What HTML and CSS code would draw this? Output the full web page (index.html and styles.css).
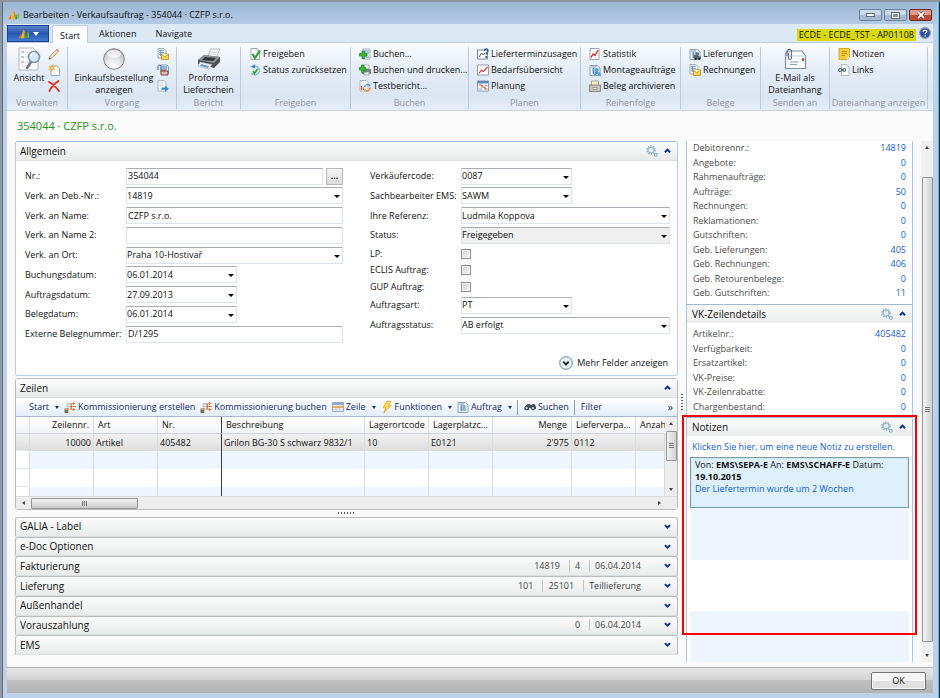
FILE: index.html
```html
<!DOCTYPE html>
<html lang="de">
<head>
    <meta charset="UTF-8">
    <meta name="viewport" content="width=device-width, initial-scale=1.0">
    <title>Bearbeiten - Verkaufsauftrag - 354044 · CZFP s.r.o.</title>
    <link rel="stylesheet" href="styles.css">
</head>
<body>
    <!-- Icons -->
    <svg class="sprite" aria-hidden="true">
        <radialGradient id="ballFill" cx=".45" cy=".85" r=".9">
            <stop offset="0" stop-color="#fff"/>
            <stop offset=".6" stop-color="#d8d8d8"/>
            <stop offset="1" stop-color="#a5a5a5"/>
        </radialGradient>
        <symbol id="logo" viewBox="0 0 14 12">
            <path d="M.5 11 3.500 6l.5 5z" fill="#e8642c"/>
            <path d="M3 11 6.500.5 7.500 11z" fill="#f9b41e"/>
            <path d="M6.500.5 8.500 4l-1 7z" fill="#e4881b"/>
            <path d="M8.500 11V6l2 .5V11z" fill="#3e9b3f"/>
            <path d="m11 11V3.500l2 1.500v5z" fill="#7ab84a"/>
        </symbol>
        <symbol id="page" viewBox="0 0 12 12">
            <path d="M2 .5h6l2.500 2.500v8.500H2z" fill="#fdfdfe" stroke="#9aa7b5"/>
            <path d="M8 .5V3h2.500" fill="#dfe8f2" stroke="#9aa7b5" stroke-width=".7"/>
        </symbol>
        <symbol id="doc" viewBox="0 0 12 12">
            <path d="M1 1.500h7.500L11 4v7.500H1z" fill="#f4f8fc" stroke="#8d9fb4"/>
            <path d="M2 3h5M3 5h6.500M3 7h6.500M3 9h6.500M4.500 4v6M7 4v6" stroke="#4d83bd" stroke-width=".8"/>
        </symbol>
        <symbol id="view" viewBox="0 0 24 24">
            <path d="M2 1h14l5 5v17H2z" fill="#fbfbfb" stroke="#b5babf"/>
            <path d="M4 4h3v2H4zM4 9h3v2H4zM4 14h3v2H4z" fill="#c3c8ce"/>
            <path d="M8 5h5M8 10h3M8 15h5M5 19h9" stroke="#ccd1d6"/>
            <path d="m14 15-4 6" stroke="#70777f" stroke-width="2.500" stroke-linecap="round"/>
            <circle cx="17" cy="10" r="5.500" fill="#cfe6f8" fill-opacity=".9" stroke="#7b92a8" stroke-width="1.500"/>
            <path d="M13.500 9a4 4 0 0 1 4-3" stroke="#fff" stroke-width="1.500" fill="none"/>
        </symbol>
        <symbol id="pencil" viewBox="0 0 12 12">
            <path d="m1 11 1-3 7-7 2 2-7 7z" fill="#f6dcb3" stroke="#b79c78" stroke-width=".8"/>
            <path d="m8 2 2 2 1.300-1.200L9.300.8z" fill="#d6a19a"/>
            <path d="m.5 11.500.7-2 1.300 1.200z" fill="#444"/>
        </symbol>
        <symbol id="new" viewBox="0 0 12 12">
            <path d="M3 2h6l2.500 2.500v7H3z" fill="#fff" stroke="#8d9fb4" stroke-width=".9"/>
            <path d="m4 0 1 2.500L7.500 2 6 4l1.500 2L5 5.500 4 8 3 5.500.5 6 2 4 .5 2 3 2.500z" fill="#f6a01e"/>
            <circle cx="4" cy="4" r="1.300" fill="#ffe28a"/>
        </symbol>
        <symbol id="delete" viewBox="0 0 12 12">
            <path d="M1 2c4 2 7 5 10 9M10.500 1C6 4 3 7 1.500 11" fill="none" stroke="#e02f1c" stroke-width="1.900" stroke-linecap="round"/>
        </symbol>
        <symbol id="ball" viewBox="0 0 24 24">
            <circle cx="12" cy="12" r="10.300" fill="url(#ballFill)" stroke="#858585"/>
            <ellipse cx="12" cy="7" rx="7" ry="4" fill="#fff" opacity=".65"/>
        </symbol>
        <symbol id="docmail" viewBox="0 0 12 12">
            <path d="M1 .5h6L9 2.500V10H1z" fill="#e9f1fa" stroke="#8d9fb4" stroke-width=".8"/>
            <path d="M2 2.500h5M2 4.500h5M2 6.500h3M3.500 2v6" stroke="#5f92c6" stroke-width=".8"/>
            <path d="M4.500 6h7v5.500h-7z" fill="#ffd65a" stroke="#b98c22" stroke-width=".8"/>
            <path d="m4.500 6 3.500 3 3.500-3" fill="#fff0ae" stroke="#b98c22" stroke-width=".7"/>
        </symbol>
        <symbol id="docattach" viewBox="0 0 12 12">
            <path d="M4 1h6l1.500 1.500V9H4z" fill="#d9e8f7" stroke="#6f8dac" stroke-width=".8"/>
            <path d="M1 6V2.500a1.500 1.500 0 0 1 3 0V7" fill="none" stroke="#38638f"/>
            <path d="M5 3h5M5 5h5" stroke="#4d83bd"/>
            <path d="M4 7h7v4H4z" fill="#d9bfae" stroke="#6d2f25" stroke-width=".8"/>
            <path d="M5 6.500h4" stroke="#d9502e" stroke-width="1.500"/>
        </symbol>
        <symbol id="docnext" viewBox="0 0 12 12">
            <path d="M1 .5h6l2 2V11H1z" fill="#f7fafd" stroke="#9aa7b5" stroke-width=".8"/>
            <path d="M2.500 3H6M2.500 5h4" stroke="#c4d0dd"/>
            <path d="M4.500 7.500H8V5.500L11.800 8.700 8 12v-2.200H4.500z" fill="#2b8fd6"/>
        </symbol>
        <symbol id="printer" viewBox="0 0 24 22">
            <path d="m11 8 3-7h9l-4 9z" fill="#fdfdfd" stroke="#9fa3a8" stroke-width=".8"/>
            <path d="m14 4 6 .5M13 6l6 .5" stroke="#c6ccd4"/>
            <path d="M1 12 7 7l16 2v5l-6 6-16-4z" fill="#4b4e54"/>
            <path d="m1 12 6-5 16 2-6 6z" fill="#8e9299"/>
            <path d="m5 12 3-3 11 1-3 3z" fill="#30333a"/>
            <path d="m3 14 12 2.500-3 4.500-11-3z" fill="#f3f6fa" stroke="#9fa3a8" stroke-width=".6"/>
            <path d="m4 16 8 2-1 2-8-2z" fill="#6d9fd4"/>
        </symbol>
        <symbol id="release" viewBox="0 0 12 12">
            <use href="#page"/>
            <path d="m3.500 6 2.500 4L11 2.500" fill="none" stroke="#27a327" stroke-width="2.200"/>
        </symbol>
        <symbol id="reset" viewBox="0 0 12 12">
            <path d="M3.500 3A4.300 4.300 0 1 1 2.500 9" fill="#e6f3fb" stroke="#7fb2d3" stroke-width="1.300"/>
            <path d="M1.500 2.500 6 .5v4z" fill="#2f86c1"/>
            <path d="m4 7 1.500 2.500L8.500 5" fill="none" stroke="#2ba12b" stroke-width="1.600"/>
        </symbol>
        <symbol id="post" viewBox="0 0 12 12">
            <path d="M4 1h7v10H4z" fill="#eef4fb" stroke="#8d9fb4" stroke-width=".8"/>
            <path d="M5 3h5M5 5h5M6 9h4" stroke="#4d83bd" stroke-width=".9"/>
            <path d="M3 3h2.500v2.500H8V8H5.500v2.500H3V8H.5V5.500H3z" fill="#3dbb3a" stroke="#1b7f1b" stroke-width=".7"/>
        </symbol>
        <symbol id="postprint" viewBox="0 0 12 12">
            <path d="M5 1h5v4H5z" fill="#fff" stroke="#8d9399" stroke-width=".7"/>
            <path d="M3 5h9v5H3z" fill="#7b8087"/>
            <path d="M5 8h5v3H5z" fill="#e8eef5" stroke="#8d9399" stroke-width=".6"/>
            <path d="M2.500 1H5v2.500h2V6H5v2.500H2.500V6H.5V3.500h2z" fill="#3dbb3a" stroke="#1b7f1b" stroke-width=".7"/>
        </symbol>
        <symbol id="testreport" viewBox="0 0 12 12">
            <path d="M1 .5h6l2 2V11H1z" fill="#f7fafd" stroke="#9aa7b5" stroke-width=".8"/>
            <path d="M2.500 10V6M4.500 10V7.500" stroke="#e0442b" stroke-width="1.200"/>
            <path d="M5.500 7a3 3 0 0 1 5.500-1" fill="none" stroke="#4b93d1" stroke-width="1.500"/>
            <path d="M11 7.500a3 3 0 0 1-5.500 2" fill="none" stroke="#f39323" stroke-width="1.500"/>
        </symbol>
        <symbol id="chart" viewBox="0 0 12 12">
            <path d="M.5 1h11v10H.5z" fill="#fff" stroke="#8a8f9b" stroke-width=".9"/>
            <path d="M2 9.500 4.500 6l2 1.500L10.500 3" fill="none" stroke="#e23b2c" stroke-width="1.200"/>
        </symbol>
        <symbol id="promise" viewBox="0 0 12 12">
            <path d="M.5 2h10v9H.5z" fill="#fff" stroke="#6f7786" stroke-width=".9"/>
            <path d="m2 9 2.500-4 2 2L8 5" fill="none" stroke="#444d5c"/>
            <path d="M7.500 3c0-3 4-2.500 3.500 0 0 1.500-1.800 1.500-1.800 3.500" fill="none" stroke="#2558b8" stroke-width="1.500"/>
            <circle cx="9.200" cy="9" r="1.100" fill="#2558b8"/>
        </symbol>
        <symbol id="plan" viewBox="0 0 12 12">
            <path d="M.5 1h11v10H.5z" fill="#fff" stroke="#8494aa" stroke-width=".9"/>
            <path d="M.5 1h11v2.500H.5z" fill="#5c86bd"/>
            <path d="M2 5h3v2h3v2h2.500" fill="none" stroke="#d3573c" stroke-width="1.200"/>
            <path d="M2 9h3M8 5.500h2.500" stroke="#7b97bf"/>
        </symbol>
        <symbol id="stats" viewBox="0 0 12 12">
            <path d="M1 .5h9v11H1z" fill="#fff" stroke="#8a9bb0" stroke-width=".9"/>
            <path d="m2 9.500 2-3.500 2 1.500L9 2" fill="none" stroke="#e02f2f" stroke-width="1.400"/>
        </symbol>
        <symbol id="assembly" viewBox="0 0 12 12">
            <use href="#doc"/>
            <path d="M8 6v3M8 9H6v2M8 9h2.500v2" fill="none" stroke="#277fc2"/>
            <path d="M6.500 4.500h3V7h-3zM5 9.500h2.300V12H5zM9.300 9.500h2.500V12H9.300z" fill="#43a8e0"/>
        </symbol>
        <symbol id="archive" viewBox="0 0 12 12">
            <path d="M2.500 1h7v5h-7z" fill="#f7eec7" stroke="#9c957c" stroke-width=".8"/>
            <path d="M.5 5h11v6.500H.5z" fill="#c7c3b6" stroke="#7a776c" stroke-width=".8"/>
            <path d="M4 7.500h4v2H4z" fill="#fff" stroke="#77746a" stroke-width=".6"/>
        </symbol>
        <symbol id="shipment" viewBox="0 0 12 12">
            <use href="#doc"/>
            <path d="M5 7h4l1.500 1.500H12V11H5z" fill="#5a6470"/>
            <path d="M7 4.500h3V7H7z" fill="#6b7785"/>
            <circle cx="6.700" cy="11" r="1" fill="#222"/>
            <circle cx="10.200" cy="11" r="1" fill="#222"/>
        </symbol>
        <symbol id="mail" viewBox="0 0 24 22">
            <path d="M2.500 5.500 5 3h14l3.500 5v12.500h-20z" fill="#fbfcfe" stroke="#7b8fae" stroke-width="1.200"/>
            <path d="M2.500 8h20" stroke="#c3cede"/>
            <path d="M19 10h2v3h-2z" fill="#e0462d"/>
            <path d="M7 14h9M7 16.500h7" stroke="#8aa0bf" stroke-width="1.200"/>
            <path d="M4 8V3.500a2.200 2.200 0 0 1 4.500 0V10a1.500 1.500 0 0 1-3 0V5" fill="none" stroke="#66748a" stroke-width="1.100"/>
        </symbol>
        <symbol id="note" viewBox="0 0 12 12">
            <path d="M1 .5h10.500V9l-2.500 2.500H1z" fill="#f7cf3d" stroke="#c99b16" stroke-width=".8"/>
            <path d="M3.500 3.500H9M3.500 5.500H9M3.500 7.500H7" stroke="#a37b10" stroke-width=".8"/>
            <path d="M9 11.500V9h2.500z" fill="#fff1ae"/>
        </symbol>
        <symbol id="link" viewBox="0 0 12 12">
            <path d="M3.500.5h5L11 3v8.500H3.500z" fill="#fdfdfe" stroke="#9aa7b5" stroke-width=".8"/>
            <circle cx="2.200" cy="6" r="1.500" fill="none" stroke="#33506f"/>
            <circle cx="6.300" cy="6" r="1.500" fill="none" stroke="#33506f"/>
            <path d="M3 6h3" stroke="#33506f"/>
        </symbol>
        <symbol id="help" viewBox="0 0 12 12">
            <circle cx="6" cy="6" r="5.400" fill="#2c50ae" stroke="#9c9fa8" stroke-width="1.100"/>
            <path d="M4.200 4.800C4.200 2.500 8 2.600 7.800 4.600c0 1.300-1.700 1.200-1.700 2.600" fill="none" stroke="#fff" stroke-width="1.300"/>
            <circle cx="6.100" cy="9" r=".8" fill="#fff"/>
        </symbol>
        <symbol id="gear" viewBox="0 0 12 12">
            <circle cx="5" cy="5" r="3.900" fill="none" stroke="#8fb3cf" stroke-width="1.600" stroke-dasharray="1.500 .95"/>
            <circle cx="5" cy="5" r="2.900" fill="#e4f0f8" stroke="#8fb3cf"/>
            <circle cx="9.800" cy="9.800" r="1.500" fill="#e4f0f8" stroke="#86abc9" stroke-width="1.100"/>
        </symbol>
        <symbol id="up" viewBox="0 0 6 6">
            <path d="M.8 4.500 3 2.200l2.200 2.300" fill="none" stroke="#10309a" stroke-width="1.700"/>
        </symbol>
        <symbol id="down" viewBox="0 0 6 6">
            <path d="M.8 1.800 3 4l2.200-2.200" fill="none" stroke="#10309a" stroke-width="1.700"/>
        </symbol>
        <symbol id="more" viewBox="0 0 14 14">
            <circle cx="7" cy="7" r="6.300" fill="#eef1f4" stroke="#4f88b5"/>
            <path d="M4.300 5.700 7 8.700l2.700-3" fill="none" stroke="#222" stroke-width="1.900"/>
        </symbol>
        <symbol id="pick" viewBox="0 0 12 12">
            <path d="M2 3h6M2 5.500h6M2 8h6M4 2v7M6.500 2v7" stroke="#a3b8cd" stroke-width=".8"/>
            <path d="M11.500 2.500h-4v6h4M12 5.500H6" fill="none" stroke="#f07a35"/>
            <path d="M9.500 1v3M9.500 7v3" stroke="#f07a35" stroke-width=".9"/>
            <path d="M.5 7.500h3.800V12H.5z" fill="#7a6d56"/>
            <path d="M.5 7.500h3.800V9H.5z" fill="#c9a35a"/>
        </symbol>
        <symbol id="lines" viewBox="0 0 12 12">
            <path d="M.5 1.500h11v9H.5z" fill="#fff" stroke="#8aa2bf" stroke-width=".9"/>
            <path d="M.5 2h11v2H.5z" fill="#8aabd2"/>
            <path d="M.5 5h11v2.300H.5z" fill="#f4a64a"/>
            <path d="M4.200 4v6.500M7.800 4v6.500M1 8.800h10" stroke="#a8bbd2" stroke-width=".7"/>
        </symbol>
        <symbol id="bolt" viewBox="0 0 12 12">
            <path d="M5.500.5H10L7.500 4.300h2.700L3 11.700l1.800-5H2.200z" fill="#ffdb55" stroke="#e0a322" stroke-width=".8"/>
        </symbol>
        <symbol id="find" viewBox="0 0 12 12">
            <path d="M1 5.500 3.500 3h2L7 4l1.500-1h2L12 5.500V8H8V7H5v2H.5z" fill="#4a5664"/>
            <circle cx="2.700" cy="7" r="1.800" fill="#9fc3df" stroke="#333d49"/>
            <circle cx="9" cy="7" r="1.800" fill="#9fc3df" stroke="#333d49"/>
        </symbol>
    </svg>

    <div class="window">
        <header class="titlebar">
            <svg class="icon"><use href="#logo"/></svg>
            <h1>Bearbeiten - Verkaufsauftrag - 354044 · CZFP s.r.o.</h1>
            <div class="window-buttons">
                <button type="button" aria-label="Minimieren"><span class="minimize"></span></button>
                <button type="button" aria-label="Maximieren"><span class="maximize"></span></button>
                <button type="button" class="close" aria-label="Schließen"><svg viewBox="0 0 10 8"><path d="m2 1 6 6M8 1 2 7" stroke="#5b3030" stroke-width="3"/><path d="m2 1 6 6M8 1 2 7" stroke="#fff" stroke-width="1.800"/></svg></button>
            </div>
        </header>

        <nav class="tabs">
            <button type="button" class="app-menu" aria-label="Anwendungsmenü"><svg class="icon"><use href="#logo"/></svg><span class="caret"></span></button>
            <button type="button" class="tab active">Start</button>
            <button type="button" class="tab">Aktionen</button>
            <button type="button" class="tab">Navigate</button>
            <span class="company">ECDE - ECDE_TST - AP01108</span>
            <button type="button" class="help" aria-label="Hilfe"><svg class="icon"><use href="#help"/></svg></button>
        </nav>

        <div class="ribbon">
            <section class="group">
                <div class="actions center">
                    <button type="button" class="big"><svg><use href="#view"/></svg>Ansicht</button>
                    <div class="icon-stack">
                        <button type="button" aria-label="Bearbeiten"><svg class="icon"><use href="#pencil"/></svg></button>
                        <button type="button" aria-label="Neu"><svg class="icon"><use href="#new"/></svg></button>
                        <button type="button" aria-label="Löschen"><svg class="icon"><use href="#delete"/></svg></button>
                    </div>
                </div>
                <h2>Verwalten</h2>
            </section>
            <section class="group">
                <div class="actions center">
                    <button type="button" class="big"><svg><use href="#ball"/></svg>Einkaufsbestellung<br>anzeigen</button>
                    <div class="icon-stack">
                        <button type="button" aria-label="Beleg senden"><svg class="icon"><use href="#docmail"/></svg></button>
                        <button type="button" aria-label="Beleg anhängen"><svg class="icon"><use href="#docattach"/></svg></button>
                        <button type="button" aria-label="Weiter"><svg class="icon"><use href="#docnext"/></svg></button>
                    </div>
                </div>
                <h2>Vorgang</h2>
            </section>
            <section class="group">
                <div class="actions center">
                    <button type="button" class="big"><svg><use href="#printer"/></svg>Proforma<br>Lieferschein</button>
                </div>
                <h2>Bericht</h2>
            </section>
            <section class="group">
                <div class="actions list">
                    <button type="button"><svg class="icon"><use href="#release"/></svg>Freigeben</button>
                    <button type="button"><svg class="icon"><use href="#reset"/></svg>Status zurücksetzen</button>
                </div>
                <h2>Freigeben</h2>
            </section>
            <section class="group">
                <div class="actions list">
                    <button type="button"><svg class="icon"><use href="#post"/></svg>Buchen...</button>
                    <button type="button"><svg class="icon"><use href="#postprint"/></svg>Buchen und drucken...</button>
                    <button type="button"><svg class="icon"><use href="#testreport"/></svg>Testbericht...</button>
                </div>
                <h2>Buchen</h2>
            </section>
            <section class="group">
                <div class="actions list">
                    <button type="button"><svg class="icon"><use href="#promise"/></svg>Lieferterminzusagen</button>
                    <button type="button"><svg class="icon"><use href="#chart"/></svg>Bedarfsübersicht</button>
                    <button type="button"><svg class="icon"><use href="#plan"/></svg>Planung</button>
                </div>
                <h2>Planen</h2>
            </section>
            <section class="group">
                <div class="actions list">
                    <button type="button"><svg class="icon"><use href="#stats"/></svg>Statistik</button>
                    <button type="button"><svg class="icon"><use href="#assembly"/></svg>Montageaufträge</button>
                    <button type="button"><svg class="icon"><use href="#archive"/></svg>Beleg archivieren</button>
                </div>
                <h2>Reihenfolge</h2>
            </section>
            <section class="group">
                <div class="actions list">
                    <button type="button"><svg class="icon"><use href="#shipment"/></svg>Lieferungen</button>
                    <button type="button"><svg class="icon"><use href="#docmail"/></svg>Rechnungen</button>
                </div>
                <h2>Belege</h2>
            </section>
            <section class="group">
                <div class="actions center">
                    <button type="button" class="big"><svg><use href="#mail"/></svg>E-Mail als<br>Dateianhang</button>
                </div>
                <h2>Senden an</h2>
            </section>
            <section class="group">
                <div class="actions list">
                    <button type="button"><svg class="icon"><use href="#note"/></svg>Notizen</button>
                    <button type="button"><svg class="icon"><use href="#link"/></svg>Links</button>
                </div>
                <h2>Dateianhang anzeigen</h2>
            </section>
        </div>

        <div class="page">
            <h2 class="page-title">354044 · CZFP s.r.o.</h2>

            <div class="columns">
                <main class="content">
                    <section class="panel general">
                        <h3 class="panel-head">Allgemein
                            <span class="head-icons"><svg class="icon"><use href="#gear"/></svg><svg class="chevron"><use href="#up"/></svg></span>
                        </h3>
                        <form class="form">
                            <div class="form-column first">
                                <div class="field"><label for="nr">Nr.:</label><span class="lookup"><input id="nr" type="text" value="354044"><button type="button" aria-label="Nummer auswählen">...</button></span></div>
                                <div class="field"><label for="debnr">Verk. an Deb.-Nr.:</label><span class="combo"><select id="debnr"><option>14819</option></select></span></div>
                                <div class="field"><label for="name">Verk. an Name:</label><input id="name" type="text" value="CZFP s.r.o."></div>
                                <div class="field"><label for="name2">Verk. an Name 2:</label><input id="name2" type="text"></div>
                                <div class="field"><label for="ort">Verk. an Ort:</label><span class="combo"><select id="ort"><option>Praha 10-Hostivař</option></select></span></div>
                                <div class="field"><label for="buchung">Buchungsdatum:</label><span class="combo short"><select id="buchung"><option>06.01.2014</option></select></span></div>
                                <div class="field"><label for="auftrag">Auftragsdatum:</label><span class="combo short"><select id="auftrag"><option>27.09.2013</option></select></span></div>
                                <div class="field"><label for="beleg">Belegdatum:</label><span class="combo short"><select id="beleg"><option>06.01.2014</option></select></span></div>
                                <div class="field"><label for="extern">Externe Belegnummer:</label><input id="extern" type="text" value="D/1295"></div>
                            </div>
                            <div class="form-column second">
                                <div class="field"><label for="vcode">Verkäufercode:</label><span class="combo short"><select id="vcode"><option>0087</option></select></span></div>
                                <div class="field"><label for="sach">Sachbearbeiter EMS:</label><span class="combo short"><select id="sach"><option>SAWM</option></select></span></div>
                                <div class="field"><label for="ref">Ihre Referenz:</label><span class="combo"><select id="ref"><option>Ludmila Koppova</option></select></span></div>
                                <div class="field"><label for="status">Status:</label><span class="combo readonly"><select id="status"><option>Freigegeben</option></select></span></div>
                                <div class="field check"><label for="lp">LP:</label><input id="lp" type="checkbox"></div>
                                <div class="field check"><label for="eclis">ECLIS Auftrag:</label><input id="eclis" type="checkbox"></div>
                                <div class="field check"><label for="gup">GUP Auftrag:</label><input id="gup" type="checkbox"></div>
                                <div class="field"><label for="art">Auftragsart:</label><span class="combo short"><select id="art"><option>PT</option></select></span></div>
                                <div class="field"><label for="astatus">Auftragsstatus:</label><span class="combo"><select id="astatus"><option>AB erfolgt</option></select></span></div>
                            </div>
                        </form>
                        <button type="button" class="more"><svg><use href="#more"/></svg>Mehr Felder anzeigen</button>
                    </section>

                    <section class="panel lines">
                        <h3 class="panel-head">Zeilen
                            <span class="head-icons"><svg class="chevron"><use href="#up"/></svg></span>
                        </h3>
                        <div class="toolbar">
                            <button type="button">Start<span class="caret"></span></button>
                            <button type="button"><svg class="icon"><use href="#pick"/></svg>Kommissionierung erstellen</button>
                            <button type="button"><svg class="icon"><use href="#pick"/></svg>Kommissionierung buchen</button>
                            <button type="button"><svg class="icon"><use href="#lines"/></svg>Zeile<span class="caret"></span></button>
                            <button type="button"><svg class="icon"><use href="#bolt"/></svg>Funktionen<span class="caret"></span></button>
                            <button type="button"><svg class="icon"><use href="#doc"/></svg>Auftrag<span class="caret"></span></button>
                            <button type="button" class="divided"><svg class="icon"><use href="#find"/></svg>Suchen</button>
                            <button type="button" class="divided">Filter</button>
                            <button type="button" class="overflow">»</button>
                        </div>
                        <div class="grid-area">
                            <div class="grid-clip">
                                <table class="grid">
                                    <colgroup>
                                        <col class="c-mark"><col class="c-col"><col class="c-col"><col class="c-col"><col class="c-text"><col class="c-col"><col class="c-col"><col class="c-qty"><col class="c-col"><col class="c-last">
                                    </colgroup>
                                    <thead>
                                        <tr><th></th><th class="num">Zeilennr.</th><th>Art</th><th class="frozen">Nr.</th><th>Beschreibung</th><th>Lagerortcode</th><th>Lagerplatzc...</th><th class="num">Menge</th><th>Lieferverpa...</th><th class="cut">Anzahl</th></tr>
                                    </thead>
                                    <tbody>
                                        <tr class="selected"><td></td><td class="num">10000</td><td>Artikel</td><td class="frozen">405482</td><td>Grilon BG-30 S schwarz 9832/1</td><td>10</td><td>E0121</td><td class="num">2'975</td><td>0112</td><td></td></tr>
                                        <tr class="alt"><td></td><td></td><td></td><td class="frozen"></td><td></td><td></td><td></td><td></td><td></td><td></td></tr>
                                        <tr><td></td><td></td><td></td><td class="frozen"></td><td></td><td></td><td></td><td></td><td></td><td></td></tr>
                                        <tr class="alt"><td></td><td></td><td></td><td class="frozen"></td><td></td><td></td><td></td><td></td><td></td><td></td></tr>
                                    </tbody>
                                </table>
                            </div>
                            <div class="scroll vertical">
                                <span class="arrow arrow-up"></span>
                                <span class="thumb"></span>
                                <span class="arrow arrow-down"></span>
                            </div>
                        </div>
                        <div class="scroll horizontal">
                            <span class="arrow arrow-left"></span>
                            <span class="thumb"></span>
                            <span class="arrow arrow-right"></span>
                        </div>
                    </section>

                    <div class="splitter"></div>

                    <div class="fasttabs">
                        <h3 class="panel-head">GALIA - Label<svg class="chevron"><use href="#down"/></svg></h3>
                        <h3 class="panel-head">e-Doc Optionen<svg class="chevron"><use href="#down"/></svg></h3>
                        <h3 class="panel-head">Fakturierung<span class="summary"><span>14819</span><span>4</span><span>06.04.2014</span></span><svg class="chevron"><use href="#down"/></svg></h3>
                        <h3 class="panel-head">Lieferung<span class="summary"><span>101</span><span>25101</span><span>Teillieferung</span></span><svg class="chevron"><use href="#down"/></svg></h3>
                        <h3 class="panel-head">Außenhandel<svg class="chevron"><use href="#down"/></svg></h3>
                        <h3 class="panel-head">Vorauszahlung<span class="summary"><span>0</span><span>06.04.2014</span></span><svg class="chevron"><use href="#down"/></svg></h3>
                        <h3 class="panel-head">EMS<svg class="chevron"><use href="#down"/></svg></h3>
                    </div>
                </main>

                <div class="side-splitter"></div>

                <aside class="factboxes">
                    <dl class="facts customer">
                        <div><dt>Debitorennr.:</dt><dd><a href="#">14819</a></dd></div>
                        <div><dt>Angebote:</dt><dd><a href="#">0</a></dd></div>
                        <div><dt>Rahmenaufträge:</dt><dd><a href="#">0</a></dd></div>
                        <div><dt>Aufträge:</dt><dd><a href="#">50</a></dd></div>
                        <div><dt>Rechnungen:</dt><dd><a href="#">0</a></dd></div>
                        <div><dt>Reklamationen:</dt><dd><a href="#">0</a></dd></div>
                        <div><dt>Gutschriften:</dt><dd><a href="#">0</a></dd></div>
                        <div><dt>Geb. Lieferungen:</dt><dd><a href="#">405</a></dd></div>
                        <div><dt>Geb. Rechnungen:</dt><dd><a href="#">406</a></dd></div>
                        <div><dt>Geb. Retourenbelege:</dt><dd><a href="#">0</a></dd></div>
                        <div><dt>Geb. Gutschriften:</dt><dd><a href="#">11</a></dd></div>
                    </dl>

                    <h3 class="fact-head">VK-Zeilendetails
                        <span class="head-icons"><svg class="icon"><use href="#gear"/></svg><svg class="chevron"><use href="#up"/></svg></span>
                    </h3>
                    <dl class="facts item">
                        <div><dt>Artikelnr.:</dt><dd><a href="#">405482</a></dd></div>
                        <div><dt>Verfügbarkeit:</dt><dd><a href="#">0</a></dd></div>
                        <div><dt>Ersatzartikel:</dt><dd><a href="#">0</a></dd></div>
                        <div><dt>VK-Preise:</dt><dd><a href="#">0</a></dd></div>
                        <div><dt>VK-Zeilenrabatte:</dt><dd><a href="#">0</a></dd></div>
                        <div><dt>Chargenbestand:</dt><dd><a href="#">0</a></dd></div>
                    </dl>

                    <section class="notes">
                        <h3 class="fact-head">Notizen
                            <span class="head-icons"><svg class="icon"><use href="#gear"/></svg><svg class="chevron"><use href="#up"/></svg></span>
                        </h3>
                        <a class="new-note" href="#">Klicken Sie hier, um eine neue Notiz zu erstellen.</a>
                        <div class="note-list">
                            <article class="note">
                                <p>Von: <strong>EMS\SEPA-E</strong> An: <strong>EMS\SCHAFF-E</strong> Datum: <strong>19.10.2015</strong></p>
                                <a href="#">Der Liefertermin wurde um 2 Wochen</a>
                            </article>
                        </div>
                        <div class="marker"></div>
                    </section>
                </aside>

                <div class="scroll vertical page-scroll">
                    <span class="arrow arrow-up"></span>
                    <span class="thumb"></span>
                    <span class="arrow arrow-down"></span>
                </div>
            </div>
        </div>

        <footer class="footer">
            <button type="button">OK</button>
        </footer>
    </div>
</body>
</html>
```

FILE: styles.css
```css
* {
    box-sizing: border-box;
}
body {
    margin: 0;
    font-family: "Open Sans", "Noto Sans", sans-serif;
    font-size: 9px;
    line-height: 12px;
    color: #111;
    background: #bcd2ec;
}
h1, h2, h3, p, dl, dd {
    margin: 0;
    font-weight: normal;
}
button, input, select {
    font: inherit;
    color: inherit;
    margin: 0;
}
button {
    padding: 0;
    border: 0;
    background: none;
    white-space: nowrap;
}
a {
    color: #0f5fdc;
    text-decoration: none;
}
.sprite {
    position: absolute;
    width: 0;
    height: 0;
}
.icon {
    width: 12px;
    height: 12px;
    flex: none;
}
.caret {
    border: 2px solid transparent;
    border-top: 3px solid currentColor;
    border-bottom: 0;
}

/* Window frame */
.window {
    display: flex;
    flex-direction: column;
    min-height: 100vh;
    padding: 0 7px 5px;
    border-top: 2px solid #8c959e;
    border-bottom: 1px solid #10313d;
    background: linear-gradient(90deg, #8f9aa5 2px, #5f6b78 2px, #5f6b78 3px, #bcd2ec 3px, #bcd2ec calc(100% - 2px), #45c4e8 calc(100% - 2px), #45c4e8 calc(100% - 1px), #10313d calc(100% - 1px));
}
.titlebar {
    display: flex;
    align-items: center;
    gap: 3px;
    height: 22px;
    margin: 0 -4px;
    padding: 4px 5px 0;
    background: linear-gradient(#9ab5d1, #b4cbe5);
}
.titlebar h1 {
    flex: 1;
    font-size: 9px;
}
.window-buttons {
    display: flex;
    gap: 2px;
}
.window-buttons button {
    display: flex;
    align-items: center;
    justify-content: center;
    width: 23px;
    height: 12px;
    border: 1px solid #6d8199;
    border-radius: 2px;
    background: linear-gradient(#c9daeb 50%, #a4bbd3 50%);
}
.window-buttons .close {
    border-color: #6b2a22;
    background: linear-gradient(#dd9a8b 50%, #bd4a33 50%);
}
.close svg {
    width: 10px;
    height: 8px;
}
.minimize, .maximize {
    width: 9px;
    height: 4px;
    border: 1px solid #5d6a78;
    background: #fff;
}
.maximize {
    width: 7px;
    height: 5px;
    border: 1px solid #fff;
    outline: 1px solid #5d6a78;
    background: #8593a3;
}

/* Tabs */
.tabs {
    display: flex;
    align-items: stretch;
    height: 19px;
    background: #dde8f5;
    border-bottom: 1px solid #bccde1;
}
.app-menu {
    display: flex;
    align-items: center;
    justify-content: center;
    gap: 3px;
    width: 42px;
    margin-top: 1px;
    margin-right: 3px;
    color: #fff;
    border: 1px solid #1c4391;
    background: linear-gradient(#5d83c8, #2857b0 50%, #3f7bd2);
}
.app-menu .caret {
    border-width: 4px 3px 0;
}
.tab {
    padding: 2px 7px 0;
    margin-right: 5px;
}
.tab.active {
    margin: 1px 4px -1px 0;
    background: #fbfcfe;
    border: 1px solid #bccde1;
    border-bottom: 0;
    border-radius: 2px 2px 0 0;
}
.company {
    align-self: flex-end;
    margin: 0 0 1px auto;
    padding: 0 2px;
    background: #d9d90a;
}
.help {
    display: flex;
    align-items: center;
    padding: 0 2px 0 3px;
}

/* Ribbon */
.ribbon {
    display: grid;
    grid-template-columns: 61fr 109fr 64fr 110fr 118fr 112fr 100fr 80fr 69fr 98fr;
    height: 68px;
    padding: 4px 5px 0 0;
    border-bottom: 1px solid #c5d3e3;
    background: linear-gradient(#fafcfe, #e4ecf6 40%, #dbe6f3 80%, #e6eef8);
}
.group {
    display: flex;
    flex-direction: column;
    height: 62px;
    min-width: 0;
    border-right: 1px solid #b9cadd;
}
.group h2 {
    font-size: 9px;
    line-height: 12px;
    text-align: center;
    white-space: nowrap;
    color: #8e959e;
}
.actions {
    display: flex;
    flex: 1;
}
.actions.center {
    justify-content: center;
    gap: 4px;
}
.actions.list {
    flex-direction: column;
    align-items: flex-start;
    gap: 4px;
    padding: 1px 0 0 8px;
}
.list button {
    display: flex;
    align-items: center;
    gap: 2px;
    height: 12px;
}
.big {
    display: flex;
    flex-direction: column;
    align-items: center;
    align-self: flex-start;
    line-height: 12px;
}
.big svg {
    width: 24px;
    height: 24px;
    margin-bottom: 1px;
}
.icon-stack {
    display: flex;
    flex-direction: column;
    gap: 4px;
    padding-top: 1px;
}
.icon-stack button {
    display: flex;
}

/* Page */
.page {
    flex: 1;
    padding: 0 0 5px 8px;
    background: #fafafa;
    border-bottom: 1px solid #b4b4b4;
}
.page-title {
    font-size: 11px;
    line-height: 30px;
    padding-left: 2px;
    color: #2c9322;
}
.columns {
    display: grid;
    grid-template-columns: minmax(0, 1fr) 8px 227px 20px;
    height: 521px;
}
.content {
    display: flex;
    flex-direction: column;
}
.panel {
    border: 1px solid #b4cdef;
    border-radius: 3px;
    background: #fff;
    margin-bottom: 2px;
}
.panel-head {
    display: flex;
    align-items: center;
    height: 19px;
    padding: 0 6px 1px 4px;
    font-size: 10px;
    border-bottom: 1px solid #dcdfe0;
    background: linear-gradient(#fbfbfb, #e9ebeb);
}
.head-icons {
    display: flex;
    align-items: center;
    gap: 6px;
    margin-left: auto;
}
.chevron {
    width: 7px;
    height: 7px;
    flex: none;
}
.general {
    height: 235px;
    border-top-color: #9dbad8;
}
.form {
    display: grid;
    grid-template-columns: 318fr 300fr;
    align-items: start;
    gap: 27px;
    padding: 6px 7px 0 9px;
}
.form-column {
    display: flex;
    flex-direction: column;
    justify-content: space-between;
}
.first {
    height: 176px;
}
.second {
    height: 167px;
}
.field {
    display: grid;
    grid-template-columns: 101px minmax(0, 1fr);
    align-items: center;
    height: 18px;
    white-space: nowrap;
}
.second .field {
    grid-template-columns: 91px minmax(0, 1fr);
}
.second .check {
    height: 15px;
}
.field input[type="text"], .field select {
    width: 100%;
    height: 17px;
    padding: 0 1px 1px;
    border: 1px solid #dde3ea;
    border-top-color: #abadb3;
    border-radius: 0;
    background: #fff;
    appearance: none;
}
.field select {
    padding: 0;
}
.field input[type="checkbox"] {
    width: 10px;
    height: 10px;
    appearance: none;
    border: 1px solid #8e8f8f;
    background: linear-gradient(135deg, #cbcfd5, #f6f6f6);
    box-shadow: inset 0 0 0 1px #f4f4f4;
}
.lookup {
    display: flex;
    gap: 3px;
}
.lookup button {
    width: 17px;
    height: 17px;
    flex: none;
    font-weight: bold;
    border: 1px solid #b5b5b5;
    background: linear-gradient(#f5f5f5, #dcdcdc);
}
.combo {
    display: block;
    position: relative;
}
.combo.short {
    width: 111px;
}
.combo::after {
    content: "";
    position: absolute;
    right: 3px;
    top: 8px;
    border: 3px solid transparent;
    border-top-color: #000;
    border-bottom: 0;
    pointer-events: none;
}
.combo.readonly select {
    background: #efefef;
}
.more {
    display: flex;
    align-items: center;
    gap: 4px;
    margin: 13px 9px 0 auto;
}
.more svg {
    width: 14px;
    height: 14px;
}

/* Lines */
.lines {
    border-color: #b9bcc0;
}
.toolbar {
    display: flex;
    align-items: center;
    height: 19px;
    gap: 5px;
    padding: 0 4px 0 13px;
    color: #1c2a6e;
    background: linear-gradient(#fff, #e3edfa);
    border-bottom: 1px solid #a9b7c9;
}
.toolbar button {
    display: flex;
    align-items: center;
    gap: 2px;
}
.toolbar .caret {
    margin-left: 4px;
}
.toolbar .divided {
    height: 15px;
    padding-left: 6px;
    border-left: 1px solid #8f9db0;
}
.toolbar .overflow {
    margin-left: auto;
    font-size: 11px;
}
.grid-area {
    display: flex;
    height: 79px;
}
.grid-clip {
    flex: 1;
    overflow: hidden;
}
.grid {
    width: 100%;
    table-layout: fixed;
    border-collapse: separate;
    border-spacing: 0;
    white-space: nowrap;
}
.c-mark { width: 14px; }
.c-col { width: 64px; }
.c-text { width: 143px; }
.c-qty { width: 79px; }
.c-last { width: auto; }
.grid th, .grid td {
    height: 18px;
    padding: 0 2px;
    text-align: left;
    font-weight: normal;
    overflow: hidden;
    border-right: 1px solid #d9dce0;
}
.grid th {
    height: 17px;
    padding: 0 4px;
    background: linear-gradient(#fff, #f3f4f5);
    border-bottom: 1px solid #cfd2d6;
}
.grid .cut {
    padding-right: 0;
    border-right: 0;
}
.grid .num {
    text-align: right;
}
.grid .frozen {
    border-right: 1px solid #3c3c3c;
}
.grid td:first-child {
    background: #fff;
    border-bottom: 1px solid #e4e6e8;
}
.alt td {
    background: #eff5fe;
}
.selected td, .grid .selected td:first-child {
    height: 17px;
    background: linear-gradient(#f1f1f1, #dcdcdc);
}

/* Scroll bars */
.scroll {
    display: flex;
    background: #ededed;
}
.scroll.vertical {
    flex-direction: column;
    align-items: center;
    width: 12px;
}
.scroll.horizontal {
    align-items: center;
    height: 13px;
    padding: 0 16px 0 4px;
    border-top: 1px solid #dcdcdc;
}
.thumb {
    display: flex;
    align-items: center;
    justify-content: center;
    border: 1px solid #979797;
    border-radius: 1px;
    background: linear-gradient(90deg, #f4f4f4, #d0d0d0);
}
.vertical .thumb {
    width: 11px;
    height: 30px;
}
.vertical .thumb::after {
    content: "";
    width: 5px;
    height: 6px;
    background: repeating-linear-gradient(#777 0 1px, transparent 1px 2px);
}
.horizontal .thumb {
    width: 107px;
    height: 11px;
    margin-left: 4px;
    background: linear-gradient(#f4f4f4, #c9c9c9);
}
.horizontal .thumb::after {
    content: "";
    width: 6px;
    height: 5px;
    background: repeating-linear-gradient(90deg, #777 0 1px, transparent 1px 2px);
}
.arrow {
    width: 0;
    height: 0;
    border: 2px solid transparent;
}
.arrow-up {
    border-top: 0;
    border-bottom: 3px solid #444;
    margin: 5px 0 6px;
}
.arrow-down {
    border-bottom: 0;
    border-top: 3px solid #444;
    margin: auto 0 5px;
}
.arrow-left {
    border-left: 0;
    border-right: 3px solid #444;
    margin: 0 2px;
}
.arrow-right {
    border-right: 0;
    border-left: 3px solid #444;
    margin-left: auto;
}

.splitter {
    width: 17px;
    height: 2px;
    margin: 0 auto 3px;
    background: repeating-linear-gradient(90deg, #555 0 1px, transparent 1px 3px);
}
.side-splitter {
    align-self: start;
    justify-self: center;
    width: 2px;
    height: 17px;
    margin-top: 253px;
    background: repeating-linear-gradient(#555 0 1px, transparent 1px 3px);
}
.fasttabs {
    display: flex;
    flex-direction: column;
    height: 138px;
}
.fasttabs .panel-head {
    flex: 1;
    border: 1px solid #b9bcbc;
    border-bottom-color: #dcdfe0;
    border-radius: 3px 3px 0 0;
}
.fasttabs .chevron {
    margin-left: auto;
}
.summary {
    display: flex;
    margin-left: auto;
    margin-right: 23px;
    font-size: 9px;
    color: #444;
}
.summary span + span {
    margin-left: 9px;
    padding-left: 5px;
    border-left: 1px solid #c4c4c4;
}
.fasttabs .summary + .chevron {
    margin-left: 0;
}

/* Fact boxes */
.factboxes {
    display: flex;
    flex-direction: column;
    border: 1px solid #a9c6f2;
    border-top: 0;
    border-bottom: 0;
    background: #fff;
}
.facts {
    display: flex;
    flex-direction: column;
    justify-content: space-between;
    padding: 0 6px;
    color: #4a4a4a;
}
.facts div {
    display: flex;
    justify-content: space-between;
    line-height: 14px;
}
.customer {
    height: 159px;
    margin-bottom: 4px;
}
.item {
    height: 87px;
    margin: 4px 0 3px;
}
.fact-head {
    display: flex;
    align-items: center;
    height: 19px;
    padding: 0 6px 1px 5px;
    font-size: 10px;
    border-top: 1px solid #a3b7d1;
    background: linear-gradient(#fafafa, #ebecec);
}
.notes {
    position: relative;
    display: flex;
    flex-direction: column;
    flex: 1;
}
.new-note {
    padding: 0 5px;
    line-height: 21px;
}
.note-list {
    flex: 1;
    margin: 0 3px;
    background: linear-gradient(#eff5fe 103px, #fff 103px, #fff 154px, #eff5fe 154px);
}
.note {
    height: 51px;
    padding: 1px 4px;
    line-height: 12px;
    color: #111;
    background: #def0fb;
    border: 1px solid #7f9aa8;
    box-shadow: inset 0 0 0 1px #cfe6f4;
}
/* Highlight round the notes */
.marker {
    position: absolute;
    top: -2px;
    left: -5px;
    right: -5px;
    height: 220px;
    border: 2px solid #fc0000;
    pointer-events: none;
}
.page-scroll {
    justify-self: end;
    background: #f0f0f0;
}
.page-scroll .thumb {
    flex: 1;
    margin: 22px 0 12px;
}
.page-scroll .arrow-down {
    margin-top: 0;
}

/* Footer */
.footer {
    display: flex;
    align-items: center;
    justify-content: flex-end;
    height: 25px;
    padding-right: 7px;
    background: linear-gradient(#e6e6e6, #d2d2d2 50%, #bebebe 50%, #b4b4b4);
}
.footer button {
    width: 55px;
    height: 18px;
    border: 1px solid #707070;
    border-radius: 2px;
    background: linear-gradient(#f4f4f4 50%, #e0e0e0 50%);
    box-shadow: inset 0 0 0 1px #fafafa;
}
```
